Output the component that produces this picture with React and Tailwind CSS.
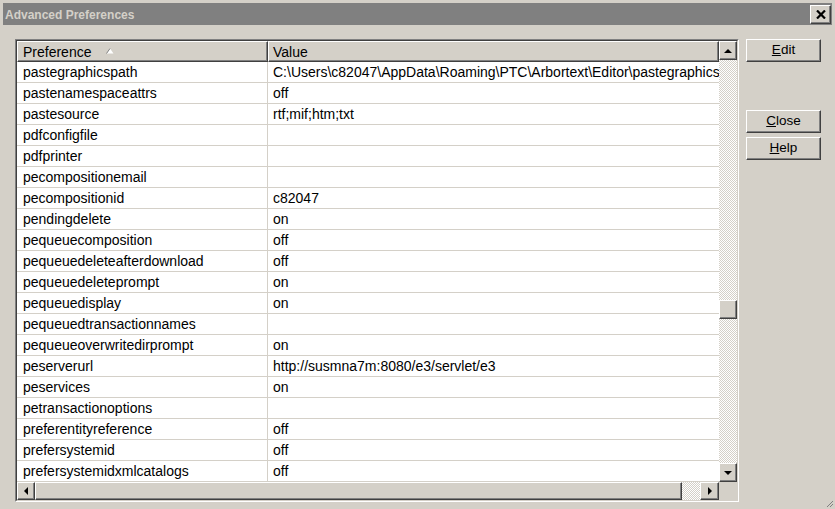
import React from "react";

const rows = [
  ["pastegraphicspath", String.raw`C:\Users\c82047\AppData\Roaming\PTC\Arbortext\Editor\pastegraphics`],
  ["pastenamespaceattrs", "off"],
  ["pastesource", "rtf;mif;htm;txt"],
  ["pdfconfigfile", ""],
  ["pdfprinter", ""],
  ["pecompositionemail", ""],
  ["pecompositionid", "c82047"],
  ["pendingdelete", "on"],
  ["pequeuecomposition", "off"],
  ["pequeuedeleteafterdownload", "off"],
  ["pequeuedeleteprompt", "on"],
  ["pequeuedisplay", "on"],
  ["pequeuedtransactionnames", ""],
  ["pequeueoverwritedirprompt", "on"],
  ["peserverurl", "http://susmna7m:8080/e3/servlet/e3"],
  ["peservices", "on"],
  ["petransactionoptions", ""],
  ["preferentityreference", "off"],
  ["prefersystemid", "off"],
  ["prefersystemidxmlcatalogs", "off"]
];

const raised =
  "border border-t-white border-l-white border-r-[#404040] border-b-[#404040] shadow-[inset_-1px_-1px_0_#808080] bg-[#d4d0c8]";

const checker =
  "bg-[image:repeating-conic-gradient(#ffffff_0_25%,#d4d0c8_0_50%)] bg-[length:2px_2px]";

function Arrow({ dir }) {
  const pts = {
    up: "0,4 4,0 8,4",
    down: "0,0 8,0 4,4",
    left: "4,0 4,8 0,4",
    right: "0,0 4,4 0,8"
  }[dir];
  const vertical = dir === "up" || dir === "down";
  return (
    <svg width={vertical ? 8 : 4} height={vertical ? 4 : 8} viewBox={vertical ? "0 0 8 4" : "0 0 4 8"}>
      <polygon points={pts} fill="#000" />
    </svg>
  );
}

function ScrollButton({ dir, className = "" }) {
  return (
    <div className={`${raised} flex items-center justify-center shrink-0 ${className}`}>
      <Arrow dir={dir} />
    </div>
  );
}

function DialogButton({ label, top }) {
  return (
    <button className={`${raised} w-[75px] h-[23px] text-[13.5px] text-black flex items-center justify-center ${top}`}>
      <span>
        <span className="underline">{label[0]}</span>
        {label.slice(1)}
      </span>
    </button>
  );
}

export default function App() {
  return (
    <div
      className="w-[835px] h-[509px] bg-[#d4d0c8] p-[3px] flex flex-col relative overflow-hidden"
      style={{ fontFamily: '"Liberation Sans", Arial, sans-serif' }}
    >
      {/* title bar */}
      <div className="h-[22px] bg-[#808080] flex items-center justify-between pl-[2px] pr-[1px] shrink-0">
        <span className="text-[12px] font-bold text-[#d4d0c8] pt-[1px]">Advanced Preferences</span>
        <div className={`${raised} w-[21px] h-[19px] flex items-center justify-center`}>
          <svg width="10" height="9" viewBox="0 0 10 9">
            <path d="M1 0.5 L9 8.5 M9 0.5 L1 8.5" stroke="#000" strokeWidth="2.2" />
          </svg>
        </div>
      </div>

      <div className="flex pt-[14px] pl-[12px]">
        {/* list box */}
        <div className="w-[724px] h-[463px] border border-t-[#808080] border-l-[#808080] border-r-white border-b-white">
          <div className="w-full h-full border border-t-[#404040] border-l-[#404040] border-r-[#d4d0c8] border-b-[#d4d0c8] flex flex-col bg-white">
            <div className="flex flex-1 min-h-0">
              <div className="w-[702px] flex flex-col overflow-hidden text-[14px] text-black">
                {/* header */}
                <div className="flex h-[21px] shrink-0">
                  <div className={`${raised} w-[251px] h-full flex items-center pl-[5px] pt-[1px]`}>
                    <span>Preference</span>
                    <svg className="ml-[15px] mt-[-2px]" width="8" height="6" viewBox="0 0 8 6">
                      <polygon points="0.5,5.5 4,0.5 7.5,5.5" fill="#fff" />
                      <path d="M0.5 5.5 L4 0.5" stroke="#808080" strokeWidth="1" fill="none" />
                    </svg>
                  </div>
                  <div className={`${raised} flex-1 h-full flex items-center pl-[4px] pt-[1px]`}>Value</div>
                </div>
                {rows.map(([name, value]) => (
                  <div key={name} className="flex h-[21px] shrink-0 border-b border-[#d4d0c8]">
                    <div className="w-[251px] shrink-0 border-r border-[#d4d0c8] pl-[6px] pt-[1px] flex items-center whitespace-nowrap">
                      {name}
                    </div>
                    <div className="flex-1 pl-[5px] pt-[1px] flex items-center whitespace-nowrap overflow-hidden">{value}</div>
                  </div>
                ))}
              </div>
              {/* vertical scrollbar */}
              <div className={`w-[18px] flex flex-col ${checker}`}>
                <ScrollButton dir="up" className="h-[19px]" />
                <div className="h-[240px]" />
                <div className={`${raised} h-[19px]`} />
                <div className="flex-1" />
                <ScrollButton dir="down" className="h-[19px]" />
              </div>
            </div>
            {/* horizontal scrollbar */}
            <div className={`h-[18px] flex shrink-0 ${checker}`}>
              <ScrollButton dir="left" className="w-[18px]" />
              <div className={`${raised} w-[647px]`} />
              <div className="flex-1" />
              <ScrollButton dir="right" className="w-[19px]" />
              <div className="w-[18px] bg-[#d4d0c8]" />
            </div>
          </div>
        </div>

        {/* buttons */}
        <div className="flex flex-col ml-[7px]">
          <DialogButton label="Edit" top="" />
          <DialogButton label="Close" top="mt-[48px]" />
          <DialogButton label="Help" top="mt-[4px]" />
        </div>
      </div>

      {/* resize grip */}
      <svg className="absolute right-[1px] bottom-[1px]" width="8" height="8" viewBox="0 0 8 8">
        <path d="M7 1 L1 7 M7 4 L4 7" stroke="#808080" strokeWidth="1" />
      </svg>
    </div>
  );
}
